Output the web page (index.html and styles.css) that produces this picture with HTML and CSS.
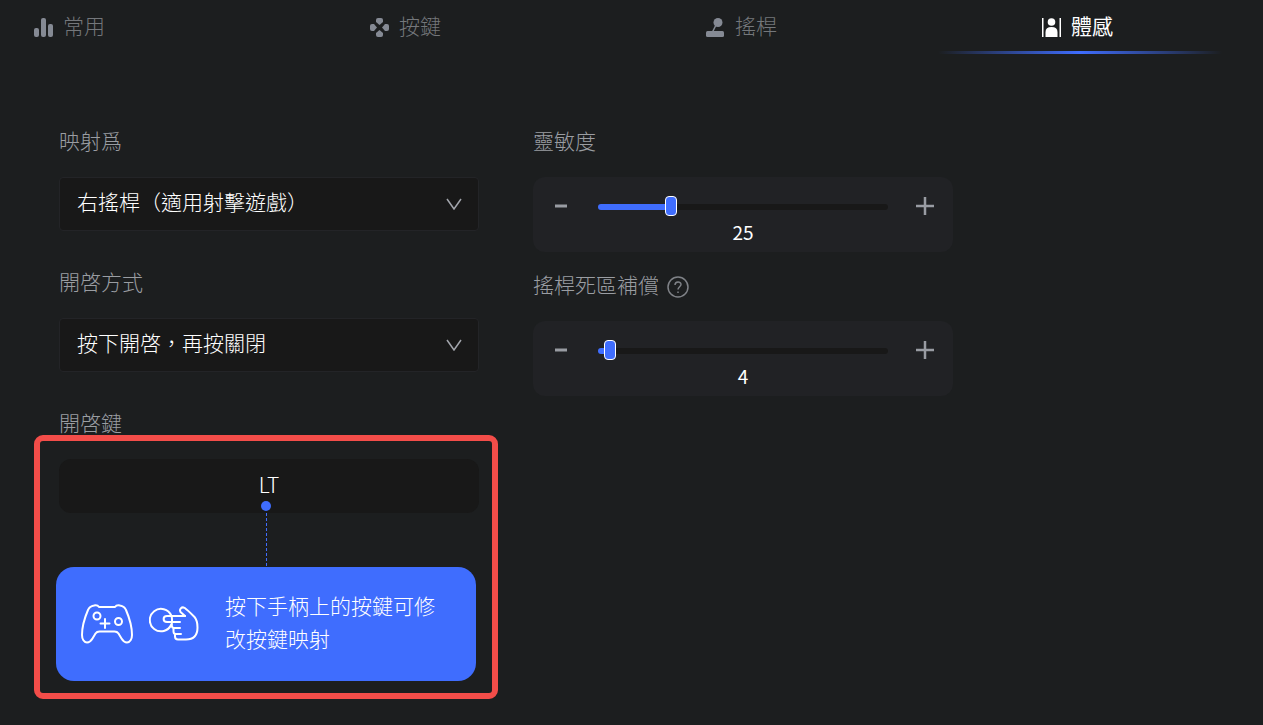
FILE: index.html
```html
<!DOCTYPE html>
<html lang="zh-Hant">
<head>
    <meta charset="UTF-8">
    <meta name="viewport" content="width=device-width, initial-scale=1.0">
    <title>體感</title>
    <link rel="stylesheet" href="styles.css">
</head>
<body>
    <nav class="tabs">
        <a href="#" class="tab">
            <svg width="20" height="20" viewBox="0 0 20 20" fill="currentColor">
                <rect x="0" y="10" width="5" height="9" rx="2"/>
                <rect x="7" y="0" width="5" height="19" rx="2"/>
                <rect x="14" y="6" width="5" height="13" rx="2"/>
            </svg>
            常用
        </a>
        <a href="#" class="tab">
            <svg width="20" height="20" viewBox="0 0 20 20" fill="currentColor">
                <path d="M8 0h3q2 0 2 2v2L9.500 7 6 4V2q0-2 2-2z"/>
                <path d="M8 19h3q2 0 2-2v-2l-3.500-3L6 15v2q0 2 2 2z"/>
                <path d="M0 8v3q0 2 2 2h2l3-3.500L4 6H2Q0 6 0 8z"/>
                <path d="M19 8v3q0 2-2 2h-2l-3-3.500L15 6h2q2 0 2 2z"/>
            </svg>
            按鍵
        </a>
        <a href="#" class="tab">
            <svg width="20" height="20" viewBox="0 0 20 20" fill="currentColor">
                <circle cx="12" cy="4.500" r="4.500"/>
                <path d="M10 7L6.500 14" stroke="currentColor" stroke-width="1.600"/>
                <rect x="0" y="13" width="18" height="6" rx="1.500"/>
            </svg>
            搖桿
        </a>
        <a href="#" class="tab active">
            <svg width="20" height="20" viewBox="0 0 20 20" fill="currentColor">
                <rect x="0" y="0" width="1.500" height="19"/>
                <rect x="17.500" y="0" width="1.500" height="19"/>
                <circle cx="9.500" cy="4" r="3.800"/>
                <path d="M3.500 19v-5q0-5 6-5t6 5v5z"/>
            </svg>
            體感
        </a>
    </nav>

    <main class="settings">
        <section class="column">
            <div class="field">
                <label class="label" for="mapping">映射爲</label>
                <div class="select-box">
                    <select id="mapping">
                        <option>右搖桿（適用射擊遊戲）</option>
                    </select>
                    <svg class="chevron" width="16" height="12" viewBox="0 0 16 12"><path d="M1 1l7 10 7-10"/></svg>
                </div>
            </div>
            <div class="field">
                <label class="label" for="mode">開啓方式</label>
                <div class="select-box">
                    <select id="mode">
                        <option>按下開啓，再按關閉</option>
                    </select>
                    <svg class="chevron" width="16" height="12" viewBox="0 0 16 12"><path d="M1 1l7 10 7-10"/></svg>
                </div>
            </div>
            <div class="field">
                <label class="label" for="key">開啓鍵</label>
                <div class="key-group">
                    <button type="button" id="key" class="key">LT</button>
                    <div class="hint">
                        <div class="connector"></div>
                        <div class="hint-card">
                            <svg class="gamepad" width="52" height="40" viewBox="0 0 52 40">
                                <path d="M18 3h16c1-1.500 3-2 5-1.500 3 .500 5 2 6 4.500 3 7 6 17 6 25 0 4-2 7.500-5 7.500-2.500 0-4-1.500-5.500-4l-3-5c-1-1.500-2-2-4-2h-15c-2 0-3 .500-4 2l-3 5c-1.500 2.500-3 4-5.500 4-3 0-5-3.500-5-7.500 0-8 3-18 6-25 1-2.500 3-4 6-4.500 2-.500 4 0 5 1.500z"/>
                                <circle cx="16" cy="12" r="3.500"/>
                                <circle cx="37.500" cy="17.500" r="3.500"/>
                                <path d="M24 15v9M19.500 19.500h9"/>
                            </svg>
                            <svg class="hand" width="50" height="36" viewBox="0 0 50 36">
                                <path d="M22.300 9.700A11.200 11.200 0 1 0 22.300 18.500"/>
                                <path d="M36 10H18c-4.500 0-4.500 6 0 6h12"/>
                                <path d="M22.300 9.700q1.200 3 .500 6.300v3.500q0 2.500 2.500 2.500H31M31 16h-8M24.500 22v3.500q0 2.500 2.500 2.500h5M26 28v2.500q0 3 3 3h8q11.500 0 11.500-12 0-7-3-10.500C42 7.500 38.500 4 35.500 1.800c-3-1.500-5.500 1.700-4 4.200L36 10"/>
                            </svg>
                            <p>按下手柄上的按鍵可修改按鍵映射</p>
                        </div>
                    </div>
                </div>
            </div>
        </section>

        <section class="column column-sliders">
            <div class="field">
                <label class="label" for="sensitivity">靈敏度</label>
                <div class="slider-card">
                    <div class="slider-row">
                        <button type="button" class="step" aria-label="-"><svg width="20" height="20" viewBox="0 0 20 20"><path d="M4 10h12" stroke-width="3"/></svg></button>
                        <div class="track" style="--value: 25%">
                            <input type="range" id="sensitivity" min="0" max="100" value="25">
                        </div>
                        <button type="button" class="step" aria-label="+"><svg width="20" height="20" viewBox="0 0 20 20"><path d="M1 10h18M10 1v18" stroke-width="2.500"/></svg></button>
                    </div>
                    <output for="sensitivity">25</output>
                </div>
            </div>
            <div class="field">
                <label class="label" for="deadzone">
                    搖桿死區補償
                    <svg class="help" width="22" height="22" viewBox="0 0 22 22">
                        <circle cx="11" cy="11" r="10"/>
                        <path d="M8 9c0-4 6-4 6-.500 0 2-3 2.500-3 5M11 15.500v1.500"/>
                    </svg>
                </label>
                <div class="slider-card">
                    <div class="slider-row">
                        <button type="button" class="step" aria-label="-"><svg width="20" height="20" viewBox="0 0 20 20"><path d="M4 10h12" stroke-width="3"/></svg></button>
                        <div class="track" style="--value: 4%">
                            <input type="range" id="deadzone" min="0" max="100" value="4">
                        </div>
                        <button type="button" class="step" aria-label="+"><svg width="20" height="20" viewBox="0 0 20 20"><path d="M1 10h18M10 1v18" stroke-width="2.500"/></svg></button>
                    </div>
                    <output for="deadzone">4</output>
                </div>
            </div>
        </section>
    </main>

    <script>
        document.querySelectorAll('.slider-card').forEach(function(card) {
            const input = card.querySelector('input');
            const steps = card.querySelectorAll('.step');

            function update() {
                card.querySelector('output').textContent = input.value;
                card.querySelector('.track').style.setProperty('--value', input.value + '%');
            }

            input.addEventListener('input', update);
            steps[0].addEventListener('click', function() { input.stepDown(); update(); });
            steps[1].addEventListener('click', function() { input.stepUp(); update(); });
        });
    </script>
</body>
</html>
```
FILE: styles.css
```css
* {
    box-sizing: border-box;
}
body {
    margin: 0;
    min-height: 100vh;
    background-color: #1c1e1f;
    color: #fff;
    font-family: "Noto Sans CJK TC", "Noto Sans", sans-serif;
    font-size: 21px;
    font-weight: 300;
    line-height: 27px;
}
button, select, input {
    font: inherit;
    color: inherit;
    margin: 0;
}
svg {
    display: block;
    flex: none;
}

/* Tabs */
.tabs {
    display: flex;
    justify-content: space-between;
    padding: 0 150px 0 34px;
}
.tab {
    position: relative;
    display: flex;
    align-items: flex-start;
    gap: 9px;
    height: 54px;
    padding-top: 12px;
    color: #74777b;
    text-decoration: none;
}
.tab svg {
    margin-top: 6px;
    color: #858a94;
}
.tab.active, .tab.active svg {
    color: #fff;
}
.tab.active {
    font-weight: 400;
}
.tab.active::after {
    content: "";
    position: absolute;
    bottom: 0;
    left: 50%;
    width: 284px;
    height: 3px;
    margin-left: -140px;
    background: linear-gradient(90deg, transparent, #3f6dfe, transparent);
}

/* Settings */
.settings {
    display: grid;
    grid-template-columns: 1fr 1fr;
    gap: 54px;
    max-width: 953px;
    padding: 73px 0 44px 59px;
}
.column {
    display: flex;
    flex-direction: column;
    gap: 37px;
}
.column-sliders {
    gap: 19px;
}
.field {
    display: flex;
    flex-direction: column;
    gap: 20px;
}
.label {
    display: flex;
    align-items: flex-start;
    gap: 8px;
    height: 30px;
    color: #9a9da2;
}
.select-box {
    display: grid;
    align-items: center;
}
.select-box > * {
    grid-area: 1 / 1;
}
.select-box select {
    appearance: none;
    width: 100%;
    height: 54px;
    padding: 0 40px 5px 17px;
    background-color: #181818;
    border: 1px solid #232427;
    border-radius: 4px;
}
.chevron {
    justify-self: end;
    margin-right: 17px;
    fill: none;
    stroke: #a2a5ac;
    stroke-width: 1.5;
    pointer-events: none;
}

/* Key binding */
.key-group {
    position: relative;
}
.key-group::after {
    content: "";
    position: absolute;
    inset: -24px -19px -18px -25px;
    border: 6px solid #f34d49;
    border-radius: 9px;
    pointer-events: none;
}
.key {
    display: block;
    width: 100%;
    height: 54px;
    padding: 0 0 4px;
    background-color: #181818;
    border: none;
    border-radius: 12px;
}
.hint {
    margin: 0 3px 0 -3px;
}
.connector {
    position: relative;
    width: 1px;
    height: 54px;
    margin: 0 auto;
    background: repeating-linear-gradient(#3f6dfe 0 3px, transparent 3px 5px);
}
.connector::before {
    content: "";
    position: absolute;
    top: -12px;
    left: -5px;
    width: 10px;
    height: 10px;
    border-radius: 50%;
    background-color: #3f6dfe;
}
.hint-card {
    display: flex;
    align-items: center;
    height: 114px;
    padding: 0 40px 0 25px;
    background-color: #3f6dfe;
    border-radius: 18px;
}
.hint-card svg {
    fill: none;
    stroke: #fff;
    stroke-width: 2;
    stroke-linecap: round;
    stroke-linejoin: round;
}
.hint-card p {
    margin: 0;
    padding-bottom: 4px;
    line-height: 33px;
}
.gamepad {
    margin-right: 16px;
}
.hand {
    margin-right: 26px;
}

/* Sliders */
.slider-card {
    padding: 16px 17px 9px;
    background-color: #212225;
    border-radius: 12px;
}
.slider-row {
    display: flex;
    align-items: center;
    gap: 26px;
    height: 28px;
}
.step {
    display: flex;
    justify-content: center;
    width: 22px;
    padding: 0 0 2px;
    background: none;
    border: none;
}
.step svg {
    stroke: #999ca3;
}
.track {
    flex: 1;
    display: flex;
    align-items: center;
    height: 6px;
    border-radius: 3px;
    background: linear-gradient(#3f6dfe, #3f6dfe) 0 0 / var(--value) 100% no-repeat #181818;
}
.track input {
    appearance: none;
    flex: 1;
    height: 20px;
    margin: 0 -6px 2px;
    background: none;
}
.track input::-webkit-slider-thumb {
    appearance: none;
    width: 12px;
    height: 20px;
    background-color: #3f6dfe;
    border: 1px solid #fff;
    border-radius: 4px;
}
.slider-card output {
    display: block;
    font-size: 19px;
    font-weight: 400;
    line-height: 22px;
    text-align: center;
}
.help {
    margin-top: 5px;
    fill: none;
    stroke: #7f8287;
    stroke-width: 1.5;
}
```
